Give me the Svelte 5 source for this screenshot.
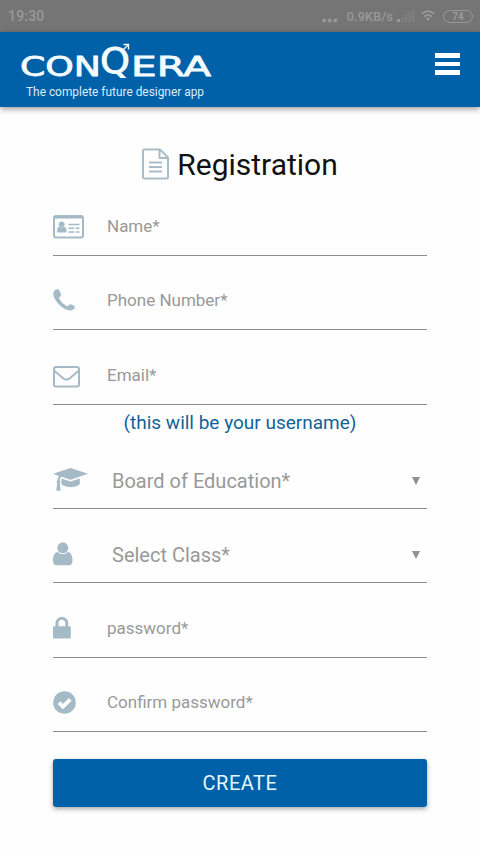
<script>
  let form = $state({
    name: "",
    phone: "",
    email: "",
    board: "",
    level: "",
    password: "",
    confirm: "",
  });

  const accountFields = [
    { key: "name", label: "Name*", type: "text" },
    { key: "phone", label: "Phone Number*", type: "tel" },
    { key: "email", label: "Email*", type: "email" },
  ];

  const selectFields = [
    { key: "board", label: "Board of Education*" },
    { key: "level", label: "Select Class*" },
  ];

  const passwordFields = [
    { key: "password", label: "password*", type: "password" },
    { key: "confirm", label: "Confirm password*", type: "password" },
  ];
</script>

{#snippet icon(name)}
  <svg class="icon" viewBox="0 0 40 30" width="40" height="30">
    {#if name === "name"}
      <rect x="1" y="4" width="29" height="21.5" rx="2" class="line" />
      <path d="M1 5.5h29" class="line" />
      <circle cx="8.7" cy="12.3" r="2.9" />
      <path d="M4.2 20.5v-2.6q0-3.2 2.4-3.2q2.1 1.2 4.2 0q2.6 0 2.6 3.2v2.6z" />
      <path d="M15.5 12.5h11M15.5 16.3h5.5M22.5 16.3h4M15.5 20h6M23 20h3.5" class="thin" />
    {:else if name === "phone"}
      <path d="M4.1 3.3C5.3 3 6 3.5 6.4 4.5L8 8.2C8.4 9.2 8.1 9.8 7.2 10.6C6 11.6 6 12.1 6.6 13.2C8.3 16.2 10.4 18.2 13.5 19.9C14.6 20.5 15.1 20.2 16 19.1C16.8 18.1 17.3 17.9 18.3 18.4L21 19.8C22 20.4 22.1 21 21.6 22.1C20.7 24 18.8 24.7 16.8 24.5C12.8 24 8.6 21.5 5.2 17.8C2.2 14.4.2 10.6.2 7.6C.2 5.2 1.8 3.7 4.1 3.3Z" />
    {:else if name === "email"}
      <rect x="1" y="6" width="25" height="19.5" rx="2" class="line" />
      <path d="M1.2 9.3C4 12.4 7.5 14.8 10 17.2C12.7 19.3 14.3 19.3 17 17.2C19.5 14.8 23 12.4 25.8 9.3" class="line" />
    {:else if name === "board"}
      <path d="M17.5 3L35 8.8L17.5 14.7L8.4 11.7C7.2 12.6 6.8 14 6.7 15.4C7.7 16.2 7.6 17.2 6.9 17.9L7.5 25.8H3.3L4.2 17.9C3.4 17.1 3.5 16 4.5 15.3C4.6 13.6 5 12 6 10.9L0 8.8Z" />
      <path d="M8.4 13.6L17.5 16.6L26.8 13.6V18.3C26 23.4 9.2 23.4 8.4 18.3Z" />
    {:else if name === "level"}
      <circle cx="9.8" cy="8.8" r="5.5" />
      <path d="M4.7 13.1C1.2 13.3 0 17.5 0 21.8C0 25 1.5 26.3 3.8 26.3H15.6C18 26.3 19.5 25 19.5 21.8C19.5 17.5 18.2 13.3 14.8 13.1Q9.8 17.5 4.7 13.1Z" />
    {:else if name === "password"}
      <path d="M4 13V9.3C4 2.7 13.8 2.7 13.8 9.3V13" class="shackle" />
      <rect x="0" y="12.2" width="17.8" height="12.3" rx="1.3" />
    {:else}
      <circle cx="11.5" cy="14.5" r="11.3" />
      <path d="M6 14.6L10 18.6L17.3 11.3" class="tick" />
    {/if}
  </svg>
{/snippet}

{#snippet textField(field)}
  <label class="field">
    {@render icon(field.key)}
    <input type={field.type} placeholder={field.label} bind:value={form[field.key]} />
  </label>
{/snippet}

<div class="screen">
  <div class="status">
    <span class="clock">19:30</span>
    <div class="indicators">
      <svg class="dots" width="16" height="5" viewBox="0 0 16 5">
        <circle cx="2.2" cy="2.5" r="2" />
        <circle cx="7.7" cy="2.5" r="2" />
        <circle cx="13.2" cy="2.5" r="2" />
      </svg>
      <span class="speed">0.9KB/s</span>
      <svg class="signal" width="18" height="14" viewBox="0 0 18 14">
        <rect x="0" y="10" width="3" height="3" />
        <g opacity="0.3">
          <rect x="4.5" y="8" width="2.5" height="5" />
          <rect x="8" y="5.5" width="2.5" height="7.5" />
          <rect x="11.5" y="3" width="2.5" height="10" />
          <rect x="15" y="0.5" width="2.5" height="12.5" />
        </g>
      </svg>
      <svg class="wifi" width="14" height="12" viewBox="0 0 14 12">
        <path d="M.8 4Q7-1.6 13.2 4M3 6.7Q7 3.2 11 6.7" />
        <path d="M4.8 8.5Q7 6.7 9.2 8.5L7 11Z" class="core" />
      </svg>
      <span class="battery">74</span>
    </div>
  </div>

  <header>
    <svg class="logo" width="200" height="62" viewBox="0 0 200 62">
      <g class="wordmark">
        <text x="0" y="35.5" textLength="81" lengthAdjust="spacingAndGlyphs">CON</text>
        <text class="big" x="80" y="33" textLength="30" lengthAdjust="spacingAndGlyphs">Q</text>
        <text x="111" y="35.5" textLength="80" lengthAdjust="spacingAndGlyphs">ERA</text>
      </g>
      <path d="M101 12L108 5M103.5 4.5H108.5V9.5" class="arrow" />
      <text class="tagline" x="6" y="56" textLength="178" lengthAdjust="spacingAndGlyphs">The complete future designer app</text>
    </svg>
    <button class="menu" aria-label="Menu">
      <span></span>
      <span></span>
      <span></span>
    </button>
  </header>

  <main>
    <h1>
      <svg width="28" height="32" viewBox="0 0 28 32">
        <path d="M2.5 1.5H18L26 9.5V29Q26 30.5 24.5 30.5H2.5Q1 30.5 1 29V3Q1 1.5 2.5 1.5ZM17.5 1.5V10H26" />
        <path d="M7 14.5H20M7 19H20M7 23.5H20" />
      </svg>
      <span>Registration</span>
    </h1>

    <form onsubmit={(e) => e.preventDefault()}>
      {#each accountFields as field}
        {@render textField(field)}
      {/each}
      <p class="hint">(this will be your username)</p>

      {#each selectFields as field}
        <label class="field">
          {@render icon(field.key)}
          <select bind:value={form[field.key]}>
            <option value="">{field.label}</option>
          </select>
          <svg class="caret" width="8" height="8" viewBox="0 0 8 8">
            <path d="M0 0H8L4 8Z" />
          </svg>
        </label>
      {/each}

      {#each passwordFields as field}
        {@render textField(field)}
      {/each}

      <button class="create">CREATE</button>
    </form>
  </main>
</div>

<style>
  :global(body) {
    background: #fefefe;
  }
  .screen {
    height: 853px;
    overflow: hidden;
    background: #fefefe;
    font-family: Roboto, "Liberation Sans", sans-serif;
  }
  .status {
    display: flex;
    justify-content: space-between;
    align-items: center;
    height: 32px;
    padding: 0 7px 0 8px;
    box-sizing: border-box;
    background: #757575;
    color: #999;
    fill: #999;
    font-weight: 500;
  }
  .clock {
    font-size: 14px;
    letter-spacing: 0.2px;
  }
  .indicators {
    display: flex;
    align-items: center;
  }
  .dots {
    margin: 8px 8px 0 0;
  }
  .speed {
    font-size: 13px;
    margin-right: 4px;
  }
  .signal {
    margin-right: 6px;
  }
  .wifi {
    margin-right: 8px;
    fill: none;
    stroke: #999;
    stroke-width: 1.6;
  }
  .wifi .core {
    fill: #999;
    stroke: none;
  }
  .battery {
    width: 28px;
    height: 11px;
    line-height: 11px;
    border: 1px solid #999;
    border-radius: 7px;
    text-align: center;
    font-size: 10px;
    font-weight: 700;
  }
  header {
    display: flex;
    justify-content: space-between;
    height: 75px;
    padding: 8px 20px 0;
    box-sizing: border-box;
    background: #0161a8;
    box-shadow: 0 2px 6px rgba(0, 0, 0, 0.4);
  }
  .logo {
    fill: #f4fbff;
  }
  .wordmark {
    font-family: "DejaVu Sans", sans-serif;
    font-size: 27px;
    stroke: #f4fbff;
    stroke-width: 0.8;
  }
  .big {
    font-size: 35px;
  }
  .arrow {
    fill: none;
    stroke: #f4fbff;
    stroke-width: 1.3;
  }
  .tagline {
    font-family: Roboto, sans-serif;
    font-size: 12.5px;
    fill: #d9ecfa;
  }
  .menu {
    display: flex;
    flex-direction: column;
    gap: 4px;
    width: 25px;
    margin: 13px 0 0;
    padding: 0;
    border: 0;
    background: none;
    align-self: flex-start;
  }
  .menu span {
    width: 25px;
    height: 4.6px;
    background: #fff;
  }
  main {
    padding: 0 53px;
  }
  h1 {
    display: flex;
    align-items: center;
    justify-content: center;
    gap: 7px;
    height: 74px;
    margin: 0;
    padding-top: 0;
    font-size: 30px;
    font-weight: 400;
    color: #111;
  }
  h1 svg {
    fill: none;
    stroke: #a9bdc8;
    stroke-width: 2;
    margin-top: 39px;
  }
  h1 span {
    margin-top: 40px;
  }
  .field {
    display: flex;
    align-items: flex-end;
    height: 74.6px;
    box-sizing: border-box;
    border-bottom: 1px solid #8e8e8e;
  }
  .icon {
    flex: none;
    margin-bottom: 13px;
    fill: #a5bac7;
  }
  .line,
  .thin,
  .shackle,
  .tick {
    fill: none;
    stroke: #a5bac7;
    stroke-width: 2;
  }
  .thin {
    stroke-width: 1.6;
  }
  .shackle {
    stroke-width: 3;
  }
  .tick {
    stroke: #fefefe;
    stroke-width: 3.8;
  }
  input,
  select {
    flex: 1;
    min-width: 0;
    height: 40px;
    margin: 0 0 9px 14px;
    padding: 0;
    border: 0;
    outline: 0;
    background: none;
    font-family: inherit;
    font-size: 17px;
    color: #999;
  }
  input::placeholder {
    color: #999;
    opacity: 1;
  }
  select {
    appearance: none;
    margin: 0 0 7px 19px;
    font-size: 20px;
  }
  .caret {
    margin: 0 7px 23px 0;
    fill: #8f8f8f;
  }
  .hint {
    height: 29.3px;
    margin: 0;
    line-height: 36px;
    text-align: center;
    font-size: 19px;
    color: #11629a;
  }
  .create {
    display: block;
    width: 100%;
    height: 48px;
    margin-top: 27px;
    padding: 0;
    border: 0;
    border-radius: 3px;
    background: #0161a8;
    box-shadow: 0 2px 5px rgba(0, 0, 0, 0.35);
    color: #e4f6ff;
    font-family: inherit;
    font-size: 20px;
    letter-spacing: 0.5px;
  }
</style>
